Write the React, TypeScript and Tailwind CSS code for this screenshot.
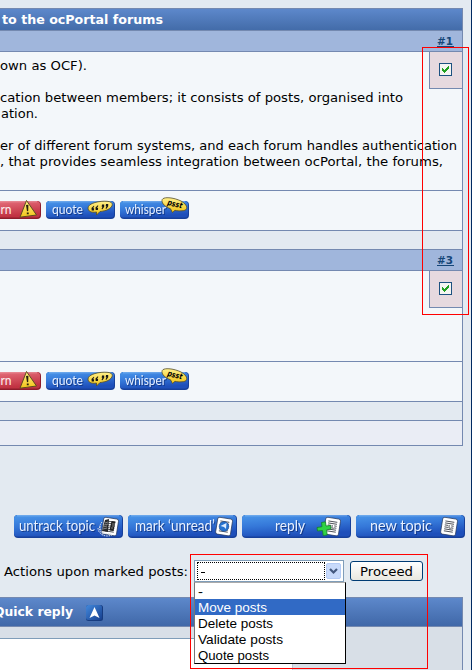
import React from "react";

const verdana = "font-[family-name:'DejaVu_Sans',sans-serif]";
const rounded = "font-[family-name:'Lato',sans-serif]";

function Line({ children, w }: { children: string; w: number }) {
  return (
    <svg className="block h-4 overflow-visible" width={w} height="16">
      <text x="0" y="13" fontSize="12.5" fill="#000" textLength={w} lengthAdjust="spacingAndGlyphs" className={verdana}>
        {children}
      </text>
    </svg>
  );
}

function Check() {
  return (
    <div className="flex h-[37px] w-[33px] shrink-0 items-start border-b border-l border-[#7489b0] bg-[#e6d9df] pt-[11px] pl-[9px]">
      <svg width="13" height="13" shapeRendering="crispEdges">
        <rect x=".5" y=".5" width="12" height="12" fill="#f5f5f2" stroke="#1c5180" />
        <path d="M3 5h1v1h1v1h1v-1h1v-1h1v-1h1v-1h1v3h-1v1h-1v1h-1v1h-1v1h-1v-1h-1v-1h-1z" fill="#21a121" />
      </svg>
    </div>
  );
}

function SubHeader({ n }: { n: string }) {
  return (
    <div className="flex h-[21px] justify-end border-b border-[#7489b0] bg-[#a0b6dc] pr-[9px]">
      <svg width="16" height="20" className="overflow-visible">
        <text x="0" y="14" fontSize="11" fontWeight="bold" fill="#154678" textLength="16" lengthAdjust="spacingAndGlyphs" className={verdana}>{n}</text>
        <rect x="0" y="15" width="17" height="1" fill="#154678" />
      </svg>
    </div>
  );
}

function Defs() {
  return (
    <svg width="0" height="0" className="absolute">
      <defs>
        <linearGradient id="blue" x1="0" y1="0" x2=".35" y2="1">
          <stop offset="0" stopColor="#4a97ea" />
          <stop offset=".5" stopColor="#3578d9" />
          <stop offset="1" stopColor="#1e4fba" />
        </linearGradient>
        <linearGradient id="red" x1="0" y1="0" x2=".35" y2="1">
          <stop offset="0" stopColor="#ea7783" />
          <stop offset="1" stopColor="#c13242" />
        </linearGradient>
        <linearGradient id="gold" x1="0" y1="0" x2="0" y2="1">
          <stop offset="0" stopColor="#fff08a" />
          <stop offset="1" stopColor="#f2c417" />
        </linearGradient>
        <linearGradient id="arrow" x1="0" y1="0" x2="1" y2="1">
          <stop offset="0" stopColor="#4389dc" />
          <stop offset="1" stopColor="#163f8f" />
        </linearGradient>
      </defs>
    </svg>
  );
}

function Plate({ w, h, fill }: { w: number; h: number; fill: string }) {
  return (
    <g>
      <rect x="0" y="0" width={w} height={h} rx="4" fill={fill === "red" ? "#8e1c2c" : "#17409a"} />
      <rect x="0" y="0" width={w - 1} height={h - 1.5} rx="3.5" fill={`url(#${fill})`} />
      <path d={`M3 .8H${w - 4}`} stroke="#fff" strokeOpacity=".28" />
    </g>
  );
}

function Label({ x, y, w, size, children }: { x: number; y: number; w: number; size: number; children: string }) {
  return (
    <g fontSize={size} className={rounded}>
      <text x={x} y={y} fill="#e8f1ff" textLength={w} lengthAdjust="spacingAndGlyphs" className="drop-shadow-[1px_1px_0.5px_rgba(8,35,100,0.6)]">{children}</text>
    </g>
  );
}

function PostButtons() {
  return (
    <div className="flex h-[39px] gap-[5px] pt-[10px]">
      <svg width="41" height="18" className="overflow-visible">
        <g transform="translate(-28 0)"><Plate w={69} h={18} fill="red" /></g>
        <g fontSize="13" className={rounded}><text x="-15" y="12.5" fill="#fff0f0" textLength="26.5" lengthAdjust="spacingAndGlyphs">warn</text></g>
        <path d="M26.5-.5L36.5 14L20 16.2Z" fill="url(#gold)" stroke="#5d4c20" strokeWidth="1" strokeLinejoin="round" />
        <path d="M26 4L28.4 3.7L28.2 10L27 10.2Z M26.800 11.4h1.9v1.9h-1.9z" fill="#29220f" />
      </svg>
      <svg width="69" height="18" className="overflow-visible">
        <Plate w={69} h={18} fill="blue" />
        <Label x={6} y={12.5} w={31} size={13}>quote</Label>
        <path d="M42 7C42 2 54-.3 61 .3C68 .5 68 6 61 9C58 10 55 10.500 54 10.500L50.500 14L50.500 11C45 12 42 10 42 7Z" fill="url(#gold)" stroke="#544b25" strokeWidth=".8" />
        <path d="M47.800 4.700l-2.300 2.300.2 2.500h2.200l.2-2.200h-1l1.200-2.200zM51.800 4.300l-2.300 2.300.2 2.500h2.200l.2-2.200h-1l1.200-2.200zM56 3.500h2.200v2.300l-1.700 2.500-1-.3 1-2.200h-.8zM60 3h2.200v2.300l-1.700 2.500-1-.3 1-2.200h-.8z" fill="#171715" />
      </svg>
      <svg width="69" height="18" className="overflow-visible">
        <Plate w={69} h={18} fill="blue" />
        <Label x={5} y={12.5} w={41} size={13}>whisper</Label>
        <path d="M42-.5C42-5 54-3.500 61 0C68 4 69 9.500 62 9.800C59 10 57 9.800 55 9.300L52.500 11.500L50.500 7.800C45 5.500 42 3 42-.5Z" fill="url(#gold)" stroke="#544b25" strokeWidth=".8" />
        <text x="47" y="3.800" fontSize="8" fontWeight="bold" fontStyle="italic" textLength="15" lengthAdjust="spacingAndGlyphs" transform="rotate(14 47 3.8)" className={verdana}>psst</text>
      </svg>
    </div>
  );
}

function Paper({ x }: { x: number }) {
  return (
    <g transform={`translate(${x} 2) rotate(9)`}>
      <rect x="0" y="0" width="15" height="17" rx="2" fill="#fff" stroke="#253657" strokeWidth=".7" />
      <path d="M3 3.500h9M3 5.500h9M3 7.500h3.500M9.500 7.500h2.500M3 9.500h3.500M9.500 9.500h2.500M3 11.500h9M3 13.500h9" stroke="#30343c" strokeWidth=".8" />
      <path d="M7.500 7v3h2" stroke="#30343c" strokeWidth=".7" fill="none" />
    </g>
  );
}

function TopicButton({ label, x, w, kind }: { label: string; x: number; w: number; kind: string }) {
  return (
    <svg width="109" height="23" className="overflow-visible">
      <Plate w={109} h={23} fill="blue" />
      <Label x={x} y={15.5} w={w} size={15}>{label}</Label>
      <Paper x={kind === "reply" ? 84 : kind === "mark" ? 90 : kind === "untrack" ? 90 : 87} />
      {kind === "reply" && <path d="M79.500 7.500L83.500 6.800L84 11L88.500 10.500L89 14L84.500 14.800L85.200 20L81.200 20.500L80.500 15.500L75.500 16L75 12.500L80 11.700Z" fill="#2fd345" stroke="#147e2b" strokeWidth=".8" />}
      {kind === "mark" && <g><circle cx="96" cy="11.500" r="4.800" fill="#2673cf" stroke="#174c99" strokeWidth=".6" /><path d="M92.500 11l6-3-.5 6-2-2z" fill="#dcecff" /></g>}
      {kind === "untrack" && <g>
        <path d="M91 5L95 4L94 17L88 16Z" fill="#27282b" /><path d="M97.500 6L101.500 6.500L99.500 16L95.500 15.500Z" fill="#222" />
        <path d="M88 7C84 12 85 17 90 20M84 13C84 19 91 23 98 20M86 11C86 17 91 20 97 18.500" fill="none" stroke="#d9dfe8" strokeWidth="1" strokeDasharray="1.5 1" />
        <path d="M91 8l3-1M90 10l4-1M89 12l4-1M89 14l4-1M98 9h3M98 11h2M97 13h2" stroke="#aaa" strokeWidth=".7" />
      </g>}
    </svg>
  );
}

const options = [
  { t: "-", w: 5 },
  { t: "Move posts", w: 69 },
  { t: "Delete posts", w: 75 },
  { t: "Validate posts", w: 85 },
  { t: "Quote posts", w: 71 },
];

export default function App() {
  return (
    <div className="relative h-[670px] w-[475px] overflow-hidden bg-white">
      <Defs />
      <div className="flex h-full w-[472px] flex-col border-r border-[#002a62] bg-[#e3eaf1] pt-2">
        <div className="w-[463px] border-r border-[#7489b0]">
          <div className="h-[23px] border-y border-[#7489b0] bg-linear-to-b from-[#5d88cb] to-[#436ca9]">
            <svg width="200" height="21">
              <text x="2" y="15" fontSize="12.5" fontWeight="bold" fill="#fff" textLength="161" lengthAdjust="spacingAndGlyphs" className={verdana}>to the ocPortal forums</text>
            </svg>
          </div>
          <SubHeader n="#1" />
          <div className="flex h-[138px] justify-between bg-[#f3f7fa]">
            <div className="flex w-[429px] shrink-0 flex-col pt-[5px]">
              <div className="h-8"><Line w={87}>own as OCF).</Line></div>
              <Line w={403}>cation between members; it consists of posts, organised into</Line>
              <div className="ml-px h-8"><Line w={37}>ation.</Line></div>
              <Line w={457}>er of different forum systems, and each forum handles authentication</Line>
              <Line w={443}>, that provides seamless integration between ocPortal, the forums,</Line>
            </div>
            <Check />
          </div>
          <div className="h-[41px] border-y border-[#7489b0] bg-[#f3f7fa]"><PostButtons /></div>
          <div className="h-[18px]" />
          <div className="border-t border-[#7489b0]"><SubHeader n="#3" /></div>
          <div className="flex h-[90px] justify-end bg-[#f3f7fa]"><Check /></div>
          <div className="h-[41px] border-y border-[#7489b0] bg-[#f3f7fa]"><PostButtons /></div>
          <div className="h-[18px]" />
          <div className="h-[26px] border-y border-[#7489b0] bg-[#eaedf5]" />
        </div>
        <div className="mt-[69px] flex h-[23px] gap-[5px] pl-[14px]">
          <TopicButton label="untrack topic" x={5} w={76} kind="untrack" />
          <TopicButton label="mark ‘unread’" x={7} w={80} kind="mark" />
          <TopicButton label="reply" x={33} w={30} kind="reply" />
          <TopicButton label="new topic" x={14} w={62} kind="new" />
        </div>
        <div className="flex h-[59px] items-start pt-[22px] pl-1">
          <div className="mt-[3px] w-[190px]"><Line w={184}>Actions upon marked posts:</Line></div>
          <div className="relative flex h-[22px] w-[150px] items-center justify-between border border-[#7f9db9] bg-white px-[2px]">
            <div className="flex h-[18px] w-[128px] items-center border border-dotted border-black">
              <svg width="10" height="16"><rect x="3" y="9" width="4" height="1" fill="#000" /></svg>
            </div>
            <svg width="15" height="16">
              <rect x=".5" y=".5" width="14" height="15" rx="1.500" fill="#c8dafb" stroke="#b4cbf5" />
              <path d="M4 6l3.500 3.500L11 6" fill="none" stroke="#44597f" strokeWidth="2.200" />
            </svg>
            <div className="absolute top-[21px] left-0 z-10 flex h-[82px] w-[152px] -translate-x-px flex-col border border-t-[#aaa] border-r-black border-b-black border-l-[#777] bg-white">
              {options.map((o) => (
                <div key={o.t} className={o.t === "Move posts" ? "h-4 bg-[#316ac5]" : "h-4"}>
                  <svg className="block" width="149" height="16">
                    <text x="3" y="13" fontSize="13.5" textLength={o.w} lengthAdjust="spacingAndGlyphs" fill={o.t === "Move posts" ? "#fff" : "#000"} className="font-[family-name:'Liberation_Sans',sans-serif]">{o.t}</text>
                  </svg>
                </div>
              ))}
            </div>
          </div>
          <button className="mt-px ml-[6px] flex h-5 w-[73px] items-start justify-center rounded-[3px] border border-[#003c74] bg-linear-to-b from-white to-[#e9e8e0] pt-[1px]">
            <Line w={53}>Proceed</Line>
          </button>
        </div>
        <div className="flex w-[463px] grow flex-col border-r border-[#7489b0]">
          <div className="flex h-[30px] items-start border-y border-[#7489b0] bg-linear-to-b from-[#5d88cb] to-[#4068a8]">
            <svg width="86" height="28" className="overflow-visible">
              <text x="-6" y="18" fontSize="12.5" fontWeight="bold" fill="#fff" textLength="79" lengthAdjust="spacingAndGlyphs" className={verdana}>Quick reply</text>
            </svg>
            <svg width="17" height="24">
              <rect x="0" y="7" width="17" height="16" rx="2.500" fill="#173c80" />
              <rect x="0" y="7" width="16" height="15" rx="2.500" fill="url(#arrow)" />
              <path d="M8.500 9L13.500 20L8.500 17.500L3.500 20Z" fill="#fff" />
            </svg>
          </div>
          <div className="flex grow bg-[#d8dfe7]">
            <div className="flex w-[293px] flex-col border-r border-[#b9c7d6] pt-[11px]">
              <div className="grow border-t border-[#7f9db9] bg-white" />
            </div>
          </div>
        </div>
      </div>
      <div className="absolute top-[47px] left-[422px] h-[268px] w-[47px] border border-[#f00]" />
      <div className="absolute top-[554px] left-[190px] z-20 h-[115px] w-[238px] border border-[#f00]" />
    </div>
  );
}
